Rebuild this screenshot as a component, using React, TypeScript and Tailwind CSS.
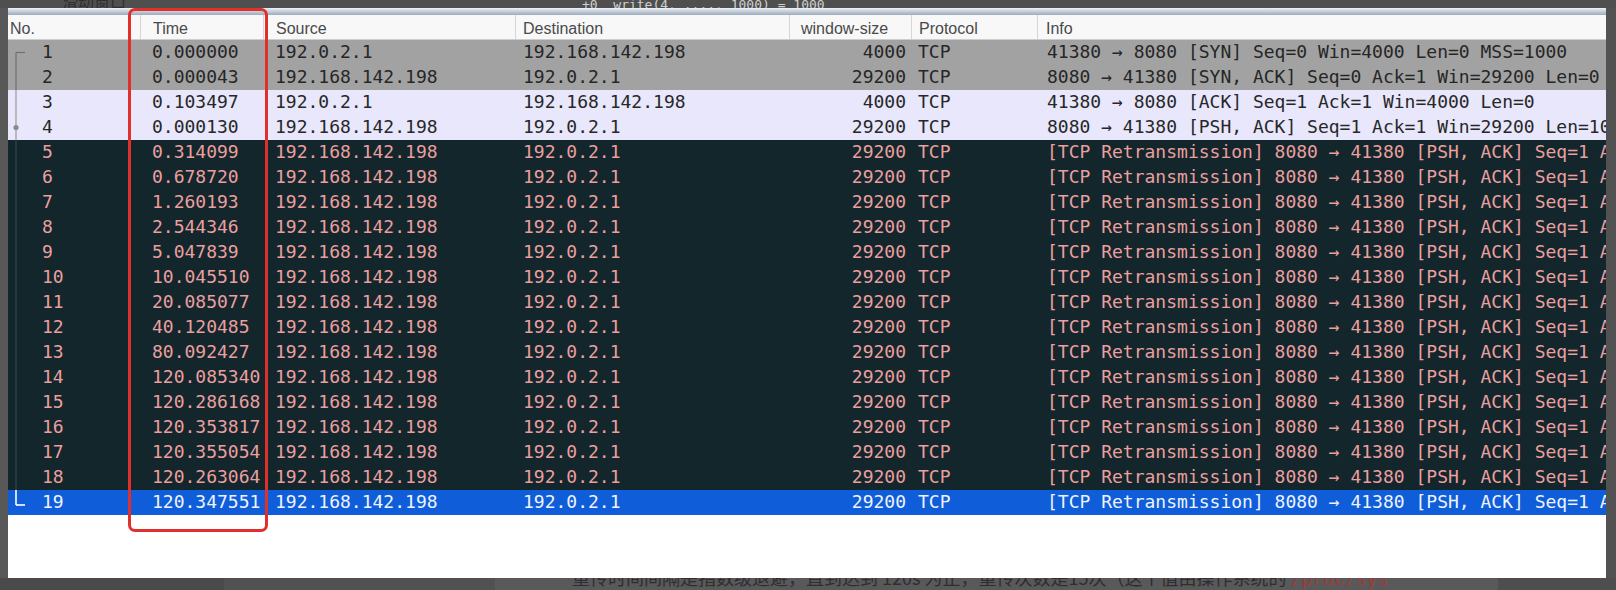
import React from 'react';

type Kind = 'syn' | 'tcp' | 'bad' | 'sel';

interface Packet {
    no: number;
    time: string;
    src: string;
    dst: string;
    win: string;
    info: string;
    kind: Kind;
}

const A = '192.0.2.1';
const B = '192.168.142.198';
const RETX = '[TCP Retransmission] 8080 → 41380 [PSH, ACK] Seq=1 Ack=1 Win=29200 Len=1000';

const retxTimes = [
    '0.314099', '0.678720', '1.260193', '2.544346', '5.047839', '10.045510', '20.085077',
    '40.120485', '80.092427', '120.085340', '120.286168', '120.353817', '120.355054', '120.263064',
];

const packets: Packet[] = [
    { no: 1, time: '0.000000', src: A, dst: B, win: '4000', info: '41380 → 8080 [SYN] Seq=0 Win=4000 Len=0 MSS=1000', kind: 'syn' },
    { no: 2, time: '0.000043', src: B, dst: A, win: '29200', info: '8080 → 41380 [SYN, ACK] Seq=0 Ack=1 Win=29200 Len=0 MSS=1460', kind: 'syn' },
    { no: 3, time: '0.103497', src: A, dst: B, win: '4000', info: '41380 → 8080 [ACK] Seq=1 Ack=1 Win=4000 Len=0', kind: 'tcp' },
    { no: 4, time: '0.000130', src: B, dst: A, win: '29200', info: '8080 → 41380 [PSH, ACK] Seq=1 Ack=1 Win=29200 Len=1000', kind: 'tcp' },
    ...retxTimes.map((t, i) => ({ no: i + 5, time: t, src: B, dst: A, win: '29200', info: RETX, kind: 'bad' as Kind })),
    { no: 19, time: '120.347551', src: B, dst: A, win: '29200', info: RETX, kind: 'sel' },
];

const rowStyle: Record<Kind, string> = {
    syn: 'bg-[#a2a2a2] text-[#262626]',
    tcp: 'bg-[#e8e7fc] text-[#272727]',
    bad: 'bg-[#12262c] text-[#eb9f9f]',
    sel: 'bg-[#0f5dd9] text-[#eef3fb]',
};

const lineColor: Record<Kind, string> = {
    syn: '#6f6f6f',
    tcp: '#9a9a9a',
    bad: '#33464c',
    sel: '#ffffff',
};

// conversation bracket in the left gutter
function Gutter({ no, kind }: { no: number; kind: Kind }) {
    const c = lineColor[kind];
    return (
        <svg width="34" height="25" viewBox="0 0 34 25" className="shrink-0">
            {no === 1 && (
                <>
                    <line x1="8" y1="12.5" x2="17" y2="12.5" stroke={c} strokeWidth="1.2" />
                    <line x1="8" y1="12.5" x2="8" y2="25" stroke={c} strokeWidth="1.2" />
                </>
            )}
            {no > 1 && no < 19 && <line x1="8" y1="0" x2="8" y2="25" stroke={c} strokeWidth="1.2" />}
            {no === 4 && <circle cx="8" cy="12.5" r="2.6" fill="#8a8a8a" />}
            {no === 19 && (
                <>
                    <line x1="8" y1="0" x2="8" y2="15" stroke={c} strokeWidth="1.6" />
                    <line x1="8" y1="15" x2="17" y2="15" stroke={c} strokeWidth="1.6" />
                </>
            )}
        </svg>
    );
}

function PacketRow({ p }: { p: Packet }) {
    return (
        <div className={`flex h-[25px] leading-[23px] whitespace-nowrap ${rowStyle[p.kind]}`}>
            <div className="w-[132px] flex shrink-0">
                <Gutter no={p.no} kind={p.kind} />
                <span>{p.no}</span>
            </div>
            <div className="w-[123px] pl-[12px] shrink-0">{p.time}</div>
            <div className="w-[252px] pl-[12px] shrink-0">{p.src}</div>
            <div className="w-[274px] pl-[8px] shrink-0">{p.dst}</div>
            <div className="w-[122px] pr-[5px] text-right shrink-0">{p.win}</div>
            <div className="w-[126px] pl-[7px] shrink-0">TCP</div>
            <div className="flex-1 pl-[10px] overflow-hidden">{p.info}</div>
        </div>
    );
}

function Header() {
    const cell = 'h-full border-l border-[#d6d6d6] shrink-0';
    return (
        <div className="flex h-[25px] leading-[28px] bg-[#f8f8f8] border-b border-[#cdcdcd] text-[16px] text-[#4a4a4a] font-['Liberation_Sans',Arial,sans-serif]">
            <div className="w-[132px] pl-[2px] shrink-0">No.</div>
            <div className={`w-[123px] pl-[12px] ${cell}`}>Time</div>
            <div className={`w-[252px] pl-[12px] ${cell}`}>Source</div>
            <div className={`w-[274px] pl-[7px] ${cell}`}>Destination</div>
            <div className={`w-[122px] pl-[11px] ${cell}`}>window-size</div>
            <div className={`w-[126px] pl-[7px] ${cell}`}>Protocol</div>
            <div className="flex-1 pl-[8px] h-full border-l border-[#d6d6d6]">Info</div>
        </div>
    );
}

export default function App() {
    return (
        <div className="relative w-[1616px] h-[590px] overflow-hidden bg-[#4f4f4f] flex flex-col">
            {/* page behind the screenshot, top edge */}
            <div className="h-[8px] flex items-end overflow-hidden shrink-0">
                <div className="pl-[62px] w-[520px] shrink-0 leading-[16px] text-[16px] text-[#2f2f2f] font-['Noto_Sans_CJK_SC',sans-serif] mb-[-1px]">
                    滑动窗口
                </div>
                <div className="pl-[62px] leading-[14px] text-[13px] text-[#cfcfcf] font-['DejaVu_Sans_Mono',monospace] mb-[-4px] whitespace-pre">
                    +0  write(4, ...., 1000) = 1000
                </div>
            </div>

            <div className="flex h-[570px] shrink-0">
                <div className="w-[8px] bg-[#585858] shrink-0" />
                <div className="w-[1598px] bg-white flex flex-col overflow-hidden shrink-0">
                    <div className="h-[7px] bg-gradient-to-b from-[#eef1f5] to-[#9eabbd] shrink-0" />
                    <Header />
                    <div className="font-['DejaVu_Sans_Mono',monospace] text-[18px]">
                        {packets.map((p) => (
                            <PacketRow key={p.no} p={p} />
                        ))}
                    </div>
                </div>
                <div className="flex-1 bg-[#525252]" />
            </div>

            {/* page behind the screenshot, bottom edge */}
            <div className="h-[12px] flex overflow-hidden shrink-0">
                <div className="w-[224px] bg-[#4a4a4a] shrink-0" />
                <div className="w-[271px] bg-[#515151] shrink-0" />
                <div className="w-[1003px] bg-[#595959] shrink-0 pl-[77px] whitespace-nowrap">
                    <div className="-mt-[10px] leading-[18px] text-[18px] text-[#2e2e2e] font-['Noto_Sans_CJK_SC',sans-serif]">
                        重传时间间隔是指数级退避，直到达到 120s 为止，重传次数是15次（这个值由操作系统的{' '}
                        <span className="text-[#a03a38] font-['DejaVu_Sans_Mono',monospace]">/proc/sys</span>
                    </div>
                </div>
                <div className="flex-1 bg-[#4e4e4e]" />
            </div>

            {/* red annotation around the Time column */}
            <div className="absolute left-[128px] top-[8px] w-[140px] h-[524px] border-[3px] border-[#e0302c] rounded-[7px]" />
        </div>
    );
}
